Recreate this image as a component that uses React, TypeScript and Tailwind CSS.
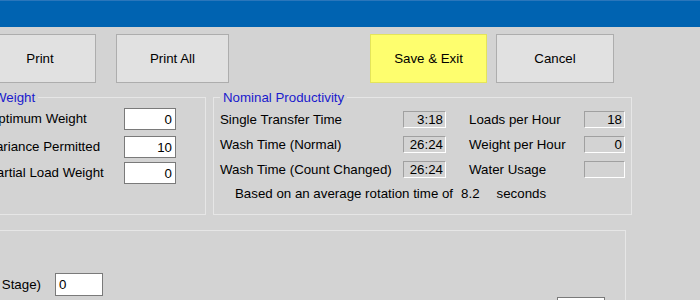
import React from 'react';

const Btn: React.FC<{ label: string; className?: string; yellow?: boolean }> = ({ label, className = '', yellow }) => (
  <button
    className={`h-full border text-[13.3px] text-black ${
      yellow ? 'bg-[#fefe6e] border-[#e4e45a]' : 'bg-[#e1e1e1] border-[#adadad]'
    } ${className}`}
  >
    {label}
  </button>
);

const Field: React.FC<{ value: string; className?: string; left?: boolean }> = ({ value, className = '', left }) => (
  <input
    readOnly
    value={value}
    className={`h-[22px] border border-[#7a7a7a] bg-white px-[3px] outline-none ${left ? 'text-left' : 'text-right'} ${className}`}
  />
);

const ReadBox: React.FC<{ value: string; className?: string }> = ({ value, className = '' }) => (
  <div
    className={`h-[17px] border border-t-[#a0a0a0] border-l-[#a0a0a0] border-b-white border-r-white text-right pr-[2px] leading-[15px] ${className}`}
  >
    {value}
  </div>
);

export default function App() {
  return (
    <div className="w-[700px] h-[300px] overflow-hidden bg-[#d3d3d3] font-['Liberation_Sans',Arial,sans-serif] text-[13.3px] text-black">
      <div className="ml-[-20px] w-[720px]">
        {/* title bar */}
        <div className="h-[27px] bg-[#0063b1] border-t border-[#2a76bb]" />

        {/* action buttons */}
        <div className="flex mt-[7px] h-[49px]">
          <Btn label="Print" className="ml-[4px] w-[112px]" />
          <Btn label="Print All" className="ml-[20px] w-[113px]" />
          <Btn label="Save & Exit" yellow className="ml-[141px] w-[117px]" />
          <Btn label="Cancel" className="ml-[9px] w-[118px]" />
        </div>

        <div className="flex mt-[7px] ml-[4px] gap-[7px]">
          {/* weight group */}
          <fieldset className="w-[222px] h-[125px] border border-[#e6e6e6]">
            <legend className="ml-[6px] px-[3px] text-[#1a1acd] leading-[15px]">Weight</legend>
            <div className="flex items-center mt-[3px] pl-[3px]">
              <span className="w-[136px] whitespace-nowrap">Optimum Weight</span>
              <Field value="0" className="w-[52px]" />
            </div>
            <div className="flex items-center mt-[6px] pl-[3px]">
              <span className="w-[136px] whitespace-nowrap">Variance Permitted</span>
              <Field value="10" className="w-[52px]" />
            </div>
            <div className="flex items-center mt-[4px] pl-[3px]">
              <span className="w-[136px] whitespace-nowrap">Partial Load Weight</span>
              <Field value="0" className="w-[52px]" />
            </div>
          </fieldset>

          {/* productivity group */}
          <fieldset className="w-[419px] h-[125px] border border-[#e6e6e6]">
            <legend className="ml-[6px] px-[3px] text-[#1a1acd] leading-[15px]">Nominal Productivity</legend>
            <div className="flex items-center mt-[6px] pl-[6px] leading-[15px]">
              <span className="w-[183px] whitespace-nowrap">Single Transfer Time</span>
              <ReadBox value="3:18" className="w-[43px]" />
              <span className="ml-[23px] w-[115px] whitespace-nowrap">Loads per Hour</span>
              <ReadBox value="18" className="w-[41px]" />
            </div>
            <div className="flex items-center mt-[8px] pl-[6px] leading-[15px]">
              <span className="w-[183px] whitespace-nowrap">Wash Time (Normal)</span>
              <ReadBox value="26:24" className="w-[43px]" />
              <span className="ml-[23px] w-[115px] whitespace-nowrap">Weight per Hour</span>
              <ReadBox value="0" className="w-[41px]" />
            </div>
            <div className="flex items-center mt-[8px] pl-[6px] leading-[15px]">
              <span className="w-[183px] whitespace-nowrap">Wash Time (Count Changed)</span>
              <ReadBox value="26:24" className="w-[43px]" />
              <span className="ml-[23px] w-[115px] whitespace-nowrap">Water Usage</span>
              <ReadBox value="" className="w-[41px]" />
            </div>
            <div className="flex mt-[8px] pl-[21px] leading-[15px] whitespace-nowrap">
              <span>Based on an average rotation time of</span>
              <span className="ml-[8px]">8.2</span>
              <span className="ml-[17px]">seconds</span>
            </div>
          </fieldset>
        </div>

        {/* stage group */}
        <fieldset className="mt-[15px] ml-[4px] w-[642px] h-[100px] border border-[#e6e6e6]">
          <div className="flex items-center mt-[42px]">
            <div className="w-[56px] flex justify-end">
              <span className="whitespace-nowrap">Drain Time (Last Stage)</span>
            </div>
            <Field value="0" left className="ml-[14px] w-[48px] h-[23px]" />
          </div>
          <div className="flex mt-[1px]">
            <Field value="" className="ml-[572px] w-[48px] h-[23px]" />
          </div>
        </fieldset>
      </div>
    </div>
  );
}
